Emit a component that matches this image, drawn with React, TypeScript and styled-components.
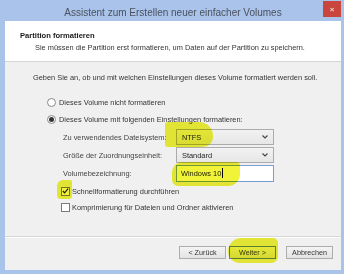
import React from "react";
import styled, { createGlobalStyle } from "styled-components";

const Global = createGlobalStyle`
  html, body { margin: 0; padding: 0; background: #ffffff; }
  body { font-family: "Liberation Sans", Arial, sans-serif; }
  * { box-sizing: border-box; }
`;

const Window = styled.div`
  position: relative;
  width: 344px;
  height: 274px;
  background: #aac3ea;
  display: flex;
  flex-direction: column;
  padding: 0 3px 4px 5px;
  overflow: hidden;
`;

const TitleBar = styled.div`
  height: 21px;
  display: flex;
  align-items: flex-start;
`;

const Title = styled.div`
  flex: 1;
  text-align: center;
  padding-left: 18px;
  padding-top: 7px;
  font-size: 10px;
  color: #4a525e;
`;

const CloseButton = styled.div`
  width: 18px;
  height: 16px;
  margin-top: 1px;
  background: #c9463f;
  color: #f4d0cc;
  font-size: 8px;
  font-weight: bold;
  display: flex;
  align-items: center;
  justify-content: center;
`;

const Client = styled.div`
  flex: 1;
  display: flex;
  flex-direction: column;
  background: #f0f0f0;
`;

const Header = styled.div`
  background: #ffffff;
  height: 41px;
  padding: 10px 0 0 15px;
  border-bottom: 1px solid #d5d5d5;
`;

const HeaderTitle = styled.div`
  font-size: 7.6px;
  font-weight: bold;
  color: #1a1a1a;
`;

const HeaderSub = styled.div`
  font-size: 7.4px;
  color: #333;
  padding-left: 15px;
  margin-top: 3px;
`;

const Body = styled.div`
  flex: 1;
  padding: 11px 0 0 28px;
  font-size: 7.4px;
  color: #333;
  border-bottom: 1px solid #d8d8d8;
  box-shadow: 0 1px 0 #ffffff;
`;

const Intro = styled.div`
  margin-bottom: 12px;
`;

const OptionRow = styled.div<{ indent?: number; h?: number }>`
  display: flex;
  align-items: center;
  height: ${(p) => p.h ?? 17}px;
  padding-left: ${(p) => p.indent ?? 0}px;
`;

const Radio = styled.span<{ checked?: boolean }>`
  width: 9px;
  height: 9px;
  border-radius: 50%;
  border: 1px solid #8a8a8a;
  background: #fff;
  margin-right: 3px;
  display: flex;
  align-items: center;
  justify-content: center;
  &::after {
    content: "";
    display: ${(p) => (p.checked ? "block" : "none")};
    width: 5px;
    height: 5px;
    border-radius: 50%;
    background: #333;
  }
`;

const Check = styled.span<{ checked?: boolean }>`
  width: 9px;
  height: 9px;
  border: 1px solid #7a7a7a;
  background: #fff;
  margin-right: 2px;
  display: flex;
  align-items: center;
  justify-content: center;
`;

const FieldGrid = styled.div`
  display: grid;
  grid-template-columns: 113px 98px;
  grid-auto-rows: 18px;
  padding-left: 30px;
  align-items: center;
`;

const Label = styled.div`
  color: #444;
`;

const SelectBox = styled.div`
  height: 16px;
  border: 1px solid #acacac;
  background: linear-gradient(#f2f2f2, #e6e6e6);
  display: flex;
  align-items: center;
  padding-left: 5px;
  color: #222;
`;

const Arrow = styled.span`
  margin-left: auto;
  margin-right: 5px;
  display: flex;
`;

const TextBox = styled.div`
  height: 17px;
  border: 1px solid #7a9cd3;
  background: #fff;
  display: flex;
  align-items: center;
  padding-left: 4px;
  color: #222;
`;

const Caret = styled.span`
  display: inline-block;
  width: 1px;
  height: 10px;
  background: #000;
  margin-left: 1px;
`;

const Checks = styled.div`
  padding-left: 28px;
  margin-top: 1px;
`;

const Footer = styled.div`
  height: 33px;
  display: flex;
  align-items: center;
  justify-content: flex-end;
  padding: 0 8px 2px 0;
`;

const Button = styled.div<{ gap?: number; focused?: boolean }>`
  width: 47px;
  height: 13px;
  border: 1px solid ${(p) => (p.focused ? "#5f84c4" : "#adadad")};
  background: linear-gradient(#f4f4f4, #e3e3e3);
  font-size: 7.2px;
  color: #333;
  display: flex;
  align-items: center;
  justify-content: center;
  margin-left: ${(p) => p.gap ?? 0}px;
`;

const Highlight = styled.div`
  position: absolute;
  background: rgba(236, 240, 0, 0.78);
  mix-blend-mode: multiply;
  pointer-events: none;
`;

const ChevronDown = () => (
  <svg width="6" height="4" viewBox="0 0 6 4">
    <path d="M0.5 0.5 L3 3 L5.5 0.5" fill="none" stroke="#444" strokeWidth="1.1" />
  </svg>
);

const Tick = () => (
  <svg width="8" height="8" viewBox="0 0 8 8">
    <path d="M1 4 L3 6.2 L7 1.2" fill="none" stroke="#222" strokeWidth="1.4" />
  </svg>
);

export default function App() {
  return (
    <>
      <Global />
      <Window>
        <TitleBar>
          <Title>Assistent zum Erstellen neuer einfacher Volumes</Title>
          <CloseButton>×</CloseButton>
        </TitleBar>
        <Client>
          <Header>
            <HeaderTitle>Partition formatieren</HeaderTitle>
            <HeaderSub>
              Sie müssen die Partition erst formatieren, um Daten auf der Partition zu speichern.
            </HeaderSub>
          </Header>
          <Body>
            <Intro>Geben Sie an, ob und mit welchen Einstellungen dieses Volume formatiert werden soll.</Intro>
            <OptionRow indent={14}>
              <Radio />
              Dieses Volume nicht formatieren
            </OptionRow>
            <OptionRow indent={14}>
              <Radio checked />
              Dieses Volume mit folgenden Einstellungen formatieren:
            </OptionRow>
            <FieldGrid>
              <Label>Zu verwendendes Dateisystem:</Label>
              <SelectBox>
                NTFS
                <Arrow>
                  <ChevronDown />
                </Arrow>
              </SelectBox>
              <Label>Größe der Zuordnungseinheit:</Label>
              <SelectBox>
                Standard
                <Arrow>
                  <ChevronDown />
                </Arrow>
              </SelectBox>
              <Label>Volumebezeichnung:</Label>
              <TextBox>
                Windows 10
                <Caret />
              </TextBox>
            </FieldGrid>
            <Checks>
              <OptionRow h={16}>
                <Check checked>
                  <Tick />
                </Check>
                Schnellformatierung durchführen
              </OptionRow>
              <OptionRow h={16}>
                <Check />
                Komprimierung für Dateien und Ordner aktivieren
              </OptionRow>
            </Checks>
          </Body>
          <Footer>
            <Button>&lt; Zurück</Button>
            <Button gap={3} focused>
              Weiter &gt;
            </Button>
            <Button gap={10}>Abbrechen</Button>
          </Footer>
        </Client>
        <Highlight style={{ left: 165, top: 122, width: 48, height: 25, borderRadius: "3px 14px 10px 3px" }} />
        <Highlight style={{ left: 172, top: 162, width: 68, height: 24, borderRadius: "10px 4px 12px 6px" }} />
        <Highlight style={{ left: 57, top: 180, width: 15, height: 19, borderRadius: "6px 2px 3px 4px" }} />
        <Highlight style={{ left: 228, top: 238, width: 50, height: 25, borderRadius: "16px 6px 8px 14px" }} />
      </Window>
    </>
  );
}
